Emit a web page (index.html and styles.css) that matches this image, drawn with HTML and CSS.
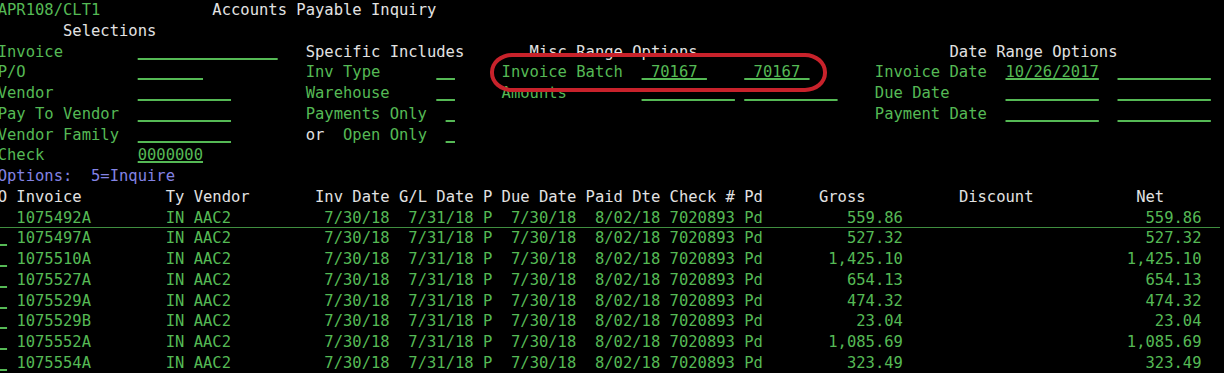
FILE: index.html
```html
<!DOCTYPE html>
<html>

<head>
  <meta charset="utf-8">
  <title>APR108 - Accounts Payable Inquiry</title>
  <link rel="stylesheet" href="styles.css">
</head>

<body>
  <div class="screen">
    <div class="line"><span class="g">APR108/CLT1</span>            <span class="w">Accounts Payable Inquiry</span></div>
    <div class="line"><span class="w">       Selections</span></div>

    <!-- selection block: four column groups -->
    <div class="line"><span class="c1 g">Invoice        <span class="f">               </span></span><span class="c2 w">Specific Includes</span><span class="c3 w">   Misc Range Options</span><span class="c4 w">        Date Range Options</span></div>
    <div class="line"><span class="c1 g">P/O            <span class="f">       </span></span><span class="c2 g">Inv Type      <span class="f">  </span></span><span class="c3 g">Invoice Batch  <span class="f"> 70167 </span>    <span class="f"> 70167 </span></span><span class="c4 g">Invoice Date  <span class="f">10/26/2017</span>  <span class="f">          </span></span></div>
    <div class="line"><span class="c1 g">Vendor         <span class="f">          </span></span><span class="c2 g">Warehouse     <span class="f">  </span></span><span class="c3 g">Amounts        <span class="f">          </span> <span class="f">          </span></span><span class="c4 g">Due Date      <span class="f">          </span>  <span class="f">          </span></span></div>
    <div class="line"><span class="c1 g">Pay To Vendor  <span class="f">          </span></span><span class="c2 g">Payments Only  <span class="f"> </span></span><span class="c3"></span><span class="c4 g">Payment Date  <span class="f">          </span>  <span class="f">          </span></span></div>
    <div class="line"><span class="c1 g">Vendor Family  <span class="f">          </span></span><span class="c2 g"><span class="w">or</span>  Open Only  <span class="f"> </span></span></div>
    <div class="line"><span class="c1 g">Check          <span class="f">0000000</span></span></div>
    <div class="line"><span class="b">Options:  5=Inquire</span></div>

    <!-- list -->
    <div class="line w">O Invoice         Ty Vendor       Inv Date G/L Date P Due Date Paid Dte Check # Pd      Gross          Discount           Net</div>
    <div class="line g cur">  1075492A        IN AAC2          7/30/18  7/31/18 P  7/30/18  8/02/18 7020893 Pd<span class="gross">559.86</span><span class="net">559.86</span></div>
    <div class="line g"><span class="f"> </span> 1075497A        IN AAC2          7/30/18  7/31/18 P  7/30/18  8/02/18 7020893 Pd<span class="gross">527.32</span><span class="net">527.32</span></div>
    <div class="line g"><span class="f"> </span> 1075510A        IN AAC2          7/30/18  7/31/18 P  7/30/18  8/02/18 7020893 Pd<span class="gross">1,425.10</span><span class="net">1,425.10</span></div>
    <div class="line g"><span class="f"> </span> 1075527A        IN AAC2          7/30/18  7/31/18 P  7/30/18  8/02/18 7020893 Pd<span class="gross">654.13</span><span class="net">654.13</span></div>
    <div class="line g"><span class="f"> </span> 1075529A        IN AAC2          7/30/18  7/31/18 P  7/30/18  8/02/18 7020893 Pd<span class="gross">474.32</span><span class="net">474.32</span></div>
    <div class="line g"><span class="f"> </span> 1075529B        IN AAC2          7/30/18  7/31/18 P  7/30/18  8/02/18 7020893 Pd<span class="gross">23.04</span><span class="net">23.04</span></div>
    <div class="line g"><span class="f"> </span> 1075552A        IN AAC2          7/30/18  7/31/18 P  7/30/18  8/02/18 7020893 Pd<span class="gross">1,085.69</span><span class="net">1,085.69</span></div>
    <div class="line g"><span class="f"> </span> 1075554A        IN AAC2          7/30/18  7/31/18 P  7/30/18  8/02/18 7020893 Pd<span class="gross">323.49</span><span class="net">323.49</span></div>
  </div>
  <div class="mark"></div>
</body>

</html>
```
FILE: styles.css
```css
body {
  margin: 0;
  padding: 0;
  background: #000;
  overflow: hidden;
  position: relative;
  height: 373px;
}

.screen {
  margin-left: -2.3px;
  font-family: "DejaVu Sans Mono", monospace;
  font-size: 15.5px;
  line-height: 20.75px;
  color: #55b955;
}

.screen .line {
  white-space: pre;
  height: 20.75px;
}

.g {
  color: #55b955;
}

.w {
  color: #e2e2e2;
}

.b {
  color: #8383e4;
}

/* input fields */
.f {
  color: #55b955;
  text-decoration: underline;
  text-decoration-thickness: 2px;
  text-underline-offset: 1px;
  text-decoration-skip-ink: none;
}

.c1,
.c2,
.c3,
.c4 {
  display: inline-block;
}

.c1 {
  width: 33ch;
}

.c2 {
  width: 21ch;
}

.c3 {
  width: 40ch;
}

.gross,
.net {
  display: inline-block;
  text-align: right;
}

.gross {
  width: 15ch;
}

.net {
  width: 32ch;
}

/* cursor row */
.cur {
  background: linear-gradient(#3f8e3f, #3f8e3f) no-repeat 0 19.5px / 1222px 1.5px;
}

.mark {
  position: absolute;
  left: 490px;
  top: 53px;
  width: 337px;
  height: 39px;
  box-sizing: border-box;
  border: 4px solid #c8222b;
  border-radius: 22px / 19px;
}
```
